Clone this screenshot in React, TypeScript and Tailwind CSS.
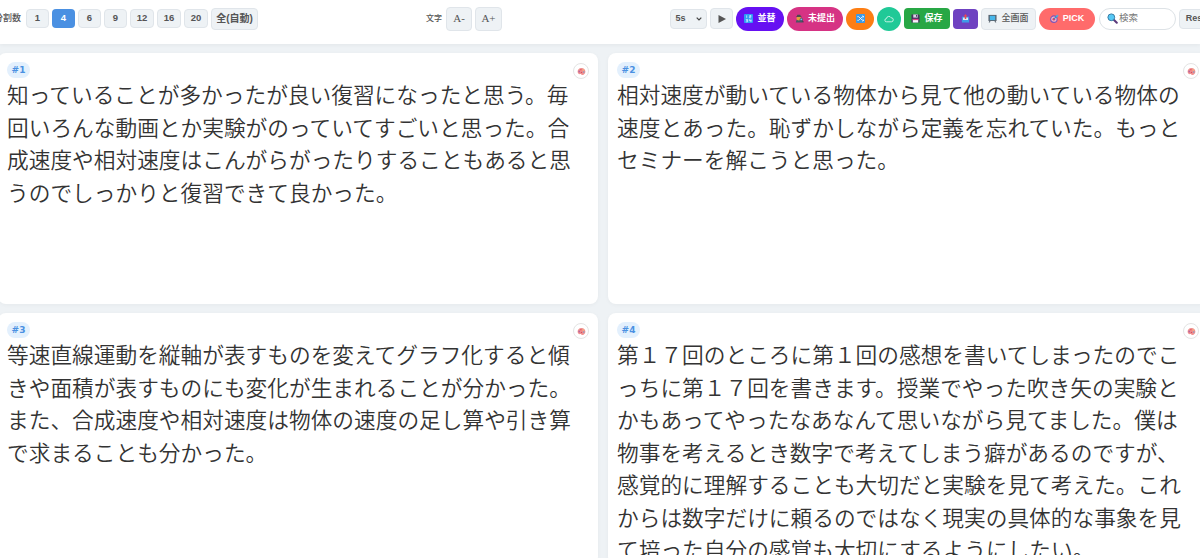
import { useState, type ReactNode } from 'react'
import { clsx } from 'clsx'

const ANSWERS = [
  '知っていることが多かったが良い復習になったと思う。毎回いろんな動画とか実験がのっていてすごいと思った。合成速度や相対速度はこんがらがったりすることもあると思うのでしっかりと復習できて良かった。',
  '相対速度が動いている物体から見て他の動いている物体の速度とあった。恥ずかしながら定義を忘れていた。もっとセミナーを解こうと思った。',
  '等速直線運動を縦軸が表すものを変えてグラフ化すると傾きや面積が表すものにも変化が生まれることが分かった。また、合成速度や相対速度は物体の速度の足し算や引き算で求まることも分かった。',
  '第１７回のところに第１回の感想を書いてしまったのでこっちに第１７回を書きます。授業でやった吹き矢の実験とかもあってやったなあなんて思いながら見てました。僕は物事を考えるとき数字で考えてしまう癖があるのですが、感覚的に理解することも大切だと実験を見て考えた。これからは数字だけに頼るのではなく現実の具体的な事象を見て培った自分の感覚も大切にするようにしたい。',
]

const SPLITS = [
  { value: '1', width: 'w-[23px]' },
  { value: '4', width: 'w-[23px]' },
  { value: '6', width: 'w-[23px]' },
  { value: '9', width: 'w-[23px]' },
  { value: '12', width: 'w-6' },
  { value: '16', width: 'w-6' },
  { value: '20', width: 'w-6' },
]

interface ButtonProps {
  className: string
  label?: string
  onClick?: () => void
  children: ReactNode
}

function ToolButton({ className, label, onClick, children }: ButtonProps) {
  return (
    <button
      aria-label={label}
      onClick={onClick}
      className={clsx('flex shrink-0 items-center justify-center whitespace-nowrap', className)}
    >
      {children}
    </button>
  )
}

const GRAY = 'rounded border border-[#e0e5ea] bg-[#eef2f5] text-[#555]'

function NumbersIcon() {
  return (
    <svg viewBox="0 0 10 10" className="size-[9px]">
      <rect width="10" height="10" rx="1" fill="#2d9cf4" />
      <path d="M3 1.500v2.800M6 1.700h1.800v1.200H6v1.300h2M2 6h2v1.200H2.500M4 7.200v1.500H2M6 5.800v1.600h2.300M7.700 6v3" fill="none" stroke="#e8f5ff" strokeWidth=".8" />
    </svg>
  )
}

function DetectiveIcon() {
  return (
    <svg viewBox="0 0 10 10" className="size-[9px]">
      <path d="M1 9.500c0-2.800 1.200-3.800 3.800-3.800s4.200 1 4.200 3.800z" fill="#4b5563" />
      <circle cx="4.200" cy="4.800" r="2.500" fill="#e0a03c" />
      <path d="M.8 3.300 2 2.600 2.600.7h3.200l.7 1.900 1.300.7z" fill="#4a4a4e" />
      <circle cx="7" cy="6" r="1.400" fill="#74b9ed" stroke="#303a44" strokeWidth=".6" />
      <path d="m8 7.200 1.500 2" stroke="#303a44" />
    </svg>
  )
}

function ShuffleIcon() {
  return (
    <svg viewBox="0 0 10 10" className="size-[9px]">
      <rect width="10" height="10" rx="1" fill="#3b9ae8" />
      <path d="M1.500 3H3l4 4h1.500M1.500 7H3l4-4h1.500M7.300 1.800 8.600 3 7.300 4.200M7.300 5.800 8.600 7 7.300 8.200" fill="none" stroke="#fff" strokeWidth=".9" />
    </svg>
  )
}

function CloudIcon() {
  return (
    <svg viewBox="0 0 12 10" className="h-[8px] w-[10px]">
      <path d="M3 8.500a2 2 0 0 1-.3-4 3.200 3.200 0 0 1 6-1 2.500 2.500 0 0 1 .3 5z" fill="none" stroke="#fff" strokeWidth=".9" />
    </svg>
  )
}

function FloppyIcon() {
  return (
    <svg viewBox="0 0 10 10" className="size-[9px]">
      <path d="M.5.5h8l1 1v8h-9z" fill="#46345e" />
      <path d="M2.500.5h5v3.500h-5z" fill="#d9d4e5" />
      <path d="M5.600 1h1.200v2H5.600z" fill="#46345e" />
      <path d="M2 5.500h6v4H2z" fill="#f5f3fa" />
      <path d="M2 5.500h6v1.300H2z" fill="#e83c88" />
    </svg>
  )
}

function OutboxIcon() {
  return (
    <svg viewBox="0 0 10 10" className="size-[9px]">
      <path d="M1 3h8v6.500H1z" fill="#3f9be8" />
      <path d="M2.200 4h5.600v2.700H2.200z" fill="#dce9f7" />
      <path d="M5 0 7.200 2.800H5.800v2.700H4.200V2.800H2.800z" fill="#e74856" />
    </svg>
  )
}

function MonitorIcon() {
  return (
    <svg viewBox="0 0 10 10" className="size-[9px]">
      <path d="M.5 1h9v6.800h-9z" fill="#59636e" />
      <path d="M2 2h6v4.800H2z" fill="#46b6ea" />
      <path d="M1.300 7.500h1.600L2.200 9.500H.8zM7.100 7.500h1.600l.5 2H7.800z" fill="#6c7680" />
    </svg>
  )
}

function TargetIcon() {
  return (
    <svg viewBox="0 0 10 10" className="size-[9px]">
      <circle cx="4.300" cy="5.700" r="3.600" fill="#f0b8cc" stroke="#8054b5" strokeWidth="1.200" />
      <circle cx="4.300" cy="5.700" r="1.500" fill="#df3e67" />
      <path d="m4.300 5.700 3.500-3.500" stroke="#2794cc" strokeWidth="1.200" />
      <path d="M6.500 2.200 8.200.3v1.500h1.600L8 3.600H6.500z" fill="#38b4e8" />
    </svg>
  )
}

function SearchIcon() {
  return (
    <svg viewBox="0 0 11 11" className="size-[11px] shrink-0">
      <path d="m6.800 6.800 3 3" stroke="#5b397b" strokeWidth="2" strokeLinecap="round" />
      <circle cx="4.300" cy="4.300" r="3.400" fill="#56c8f5" stroke="#397da5" />
    </svg>
  )
}

function PaletteIcon() {
  return (
    <svg viewBox="0 0 10 10" className="size-[9px] shrink-0">
      <path d="M5 1C2 1 .7 3 .7 5.200c0 2 1.500 3.100 3 2.700.8-.2 1 .7 1.800.9C8 9 9.400 7 9.300 5 9.200 2.500 7.500 1 5 1z" fill="#f0908f" />
      <circle cx="2.500" cy="5" r="1" fill="#b465a0" />
      <circle cx="4.300" cy="3" r=".9" fill="#e05a68" />
      <circle cx="7" cy="3.400" r=".9" fill="#f3bd75" />
      <circle cx="7.500" cy="5.600" r=".9" fill="#7f9dcc" />
      <circle cx="5" cy="6" r=".8" fill="#cf5064" />
    </svg>
  )
}

function AnswerCard({ index, text, size }: { index: number; text: string; size: number }) {
  return (
    <article className="relative h-[251px] overflow-hidden rounded-lg bg-white px-[9px] pt-[9px] shadow-[0_1px_4px_rgba(0,0,0,0.04)]">
      <span className="flex h-4 w-[23px] items-center justify-center rounded-full bg-[#e3f0fd] pt-px font-['DejaVu_Sans',sans-serif] text-[9px] leading-none font-bold text-[#4a90e2]">
        #{index}
      </span>
      <button
        aria-label="色"
        className="absolute top-[10px] right-[9px] flex size-4 items-center justify-center rounded-full border border-[#e4e4e4] bg-white pt-px"
      >
        <PaletteIcon />
      </button>
      <p
        className="h-[217px] overflow-hidden font-['Noto_Sans_CJK_JP',sans-serif] leading-[1.5] font-[350] break-all text-[#333]"
        style={{ fontSize: size }}
      >
        {text}
      </p>
    </article>
  )
}

export default function App() {
  const [split, setSplit] = useState('4')
  const [size, setSize] = useState(21.7)

  return (
    <div className="h-[558px] w-full overflow-hidden bg-[#eef2f5] font-['Liberation_Sans','Noto_Sans_CJK_JP',sans-serif]">
      <header className="h-11 overflow-hidden bg-white text-[9px] font-bold shadow-[0_1px_4px_rgba(0,0,0,0.05)]">
        <div className="-ml-2 flex h-[37px] w-[1230px] items-center">
          <div className="flex w-[434px] shrink-0 items-center gap-[3px]">
            <span className="mr-px w-[30px] shrink-0 pl-0.5 font-medium whitespace-nowrap text-[#555]">分割数</span>
            {SPLITS.map(({ value, width }) => (
              <ToolButton
                key={value}
                onClick={() => setSplit(value)}
                className={clsx(
                  'h-[19px] text-[9.5px]',
                  width,
                  split === value ? 'rounded bg-[#4a90e2] text-white' : GRAY,
                )}
              >
                {value}
              </ToolButton>
            ))}
            <ToolButton className={clsx('h-[22px] w-[47px] text-[10px]', GRAY)}>全(自動)</ToolButton>
          </div>

          <div className="flex w-[244px] shrink-0 items-center gap-[3px]">
            <span className="mr-px w-4 text-[8px] font-medium whitespace-nowrap text-[#555]">文字</span>
            <ToolButton
              onClick={() => setSize(size - 1)}
              className={clsx("h-6 w-[26px] font-['Liberation_Serif',serif] text-[11px] font-normal", GRAY)}
            >
              A-
            </ToolButton>
            <ToolButton
              onClick={() => setSize(size + 1)}
              className={clsx("h-6 w-[27px] font-['Liberation_Serif',serif] text-[11px] font-normal", GRAY)}
            >
              A+
            </ToolButton>
          </div>

          <div className="flex shrink-0 items-center gap-[3px]">
            <ToolButton className={clsx('h-5 w-[37px] gap-2.5', GRAY)}>
              5s
              <svg viewBox="0 0 6 4" className="h-1 w-1.5">
                <path d="m.7.7 2.300 2.300L5.300.7" fill="none" stroke="#444" strokeWidth="1.200" />
              </svg>
            </ToolButton>
            <ToolButton label="再生" className={clsx('h-[21px] w-[23px]', GRAY)}>
              <svg viewBox="0 0 8 8" className="size-2">
                <path d="M.5 0 8 4 .5 8z" fill="#555" />
              </svg>
            </ToolButton>
            <ToolButton className="h-6 w-12 gap-1 rounded-full bg-[#6610f2] text-white">
              <NumbersIcon />並替
            </ToolButton>
            <ToolButton className="h-6 w-14 gap-1 rounded-full bg-[#d63384] text-white">
              <DetectiveIcon />未提出
            </ToolButton>
            <ToolButton label="シャッフル" className="h-[22px] w-7 rounded-full bg-[#fd7e14]">
              <ShuffleIcon />
            </ToolButton>
            <ToolButton label="クラウド" className="size-6 rounded-full bg-[#20c997]">
              <CloudIcon />
            </ToolButton>
            <ToolButton className="h-[21px] w-[46px] gap-1 rounded bg-[#28a745] text-white">
              <FloppyIcon />保存
            </ToolButton>
            <ToolButton label="出力" className="h-5 w-[25px] rounded bg-[#6f42c1]">
              <OutboxIcon />
            </ToolButton>
            <ToolButton className={clsx('h-[22px] w-[55px] gap-1 font-medium', GRAY)}>
              <MonitorIcon />全画面
            </ToolButton>
            <ToolButton className="h-[22px] w-14 gap-1 rounded-full bg-[#ff6b6b] text-white">
              <TargetIcon />PICK
            </ToolButton>
            <label className="ml-px flex h-[22px] w-[77px] shrink-0 items-center gap-px rounded-full border border-[#dde2e6] bg-white pl-[7px]">
              <SearchIcon />
              <input placeholder="検索" className="w-12 text-[9.5px] font-normal outline-none placeholder:text-[#777]" />
            </label>
            <ToolButton className={clsx('h-5 w-[38px]', GRAY)}>Reset</ToolButton>
          </div>
        </div>
      </header>

      <main className="-ml-0.5 grid w-[1210px] grid-cols-[600px_600px] gap-x-[10px] gap-y-[9px] pt-[9px]">
        {ANSWERS.map((text, i) => (
          <AnswerCard key={i} index={i + 1} text={text} size={size} />
        ))}
      </main>
    </div>
  )
}
